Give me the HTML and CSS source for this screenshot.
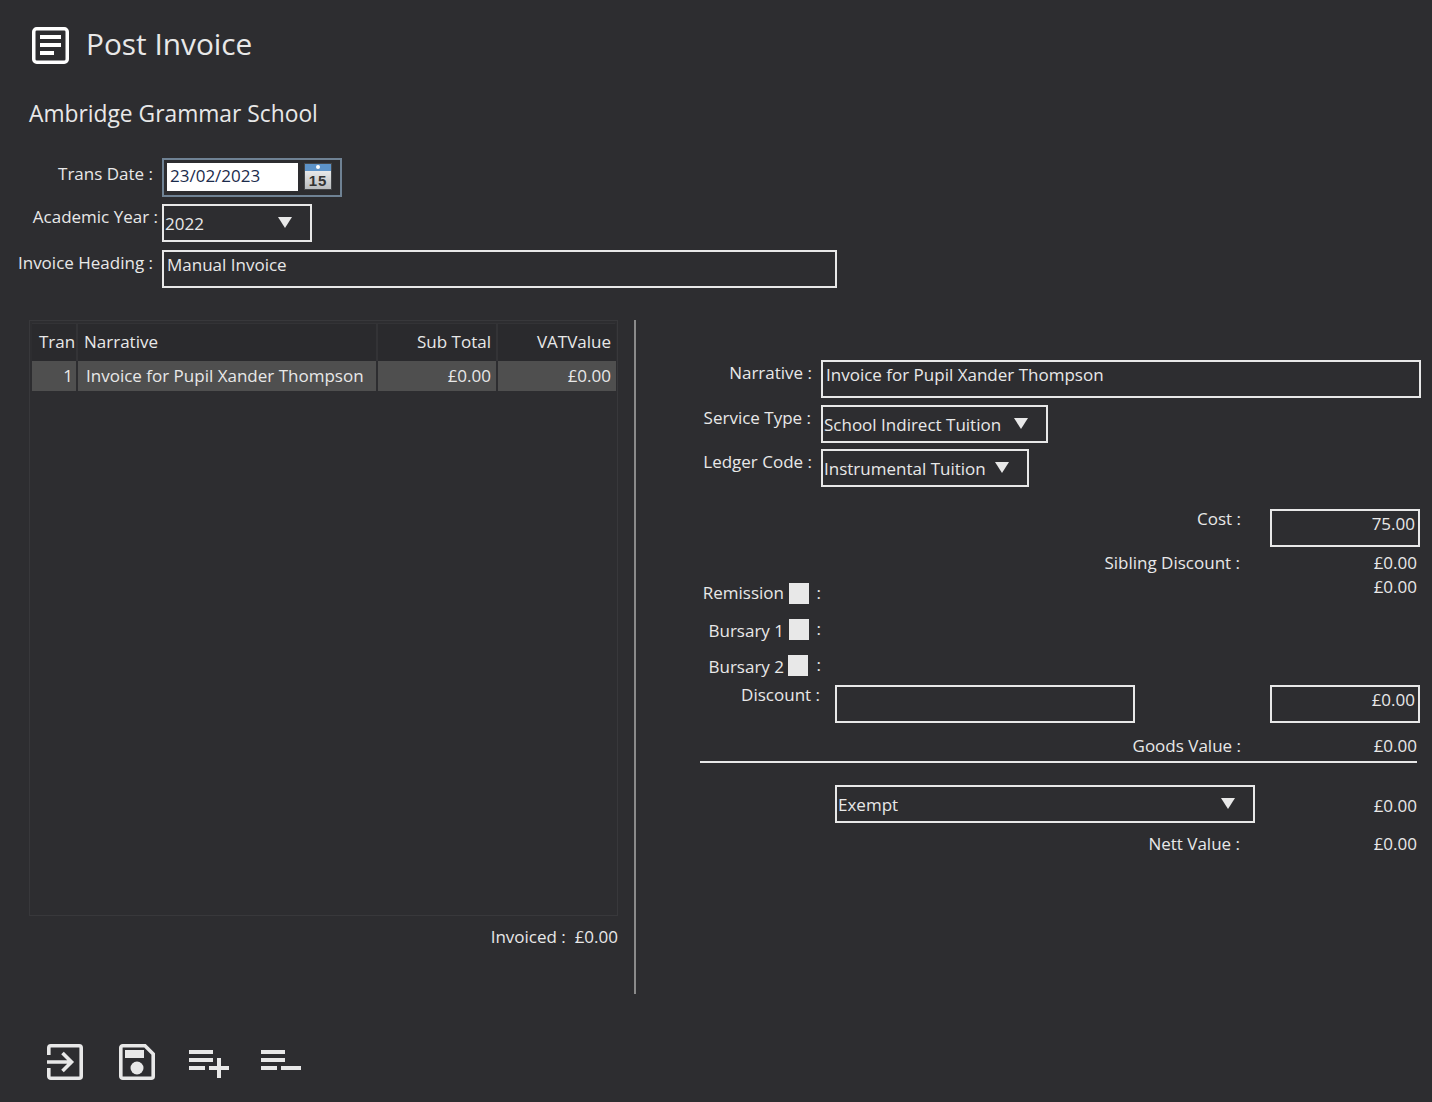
FILE: index.html
```html
<!DOCTYPE html>
<html lang="en">

<head>
  <meta charset="UTF-8">
  <meta name="viewport" content="width=device-width, initial-scale=1.0">
  <title>Post Invoice</title>
  <link rel="stylesheet" href="styles.css">
</head>

<body>
  <div class="header">
    <svg class="header-icon" width="37" height="37" viewBox="0 0 37 37">
      <rect x="1.750" y="1.750" width="33.500" height="33.500" rx="3" fill="none" stroke="#fff" stroke-width="3.500" />
      <path d="M8 8h21v4H8zM8 16h21v4H8zM8 24h14v4H8z" fill="#fff" />
    </svg>
    <h1 class="title">Post Invoice</h1>
  </div>
  <h2 class="school">Ambridge Grammar School</h2>

  <div class="top-form">
    <div class="top-row date-row">
      <label class="top-label">Trans Date :</label>
      <div class="date-box">
        <span class="date-input">23/02/2023</span>
        <span class="calendar"><span class="calendar-head"></span><span class="calendar-day">15</span></span>
      </div>
    </div>
    <div class="top-row year-row">
      <label class="top-label year-label">Academic Year :</label>
      <div class="field select w150"><span>2022</span><i class="arrow"></i></div>
    </div>
    <div class="top-row heading-row">
      <label class="top-label">Invoice Heading :</label>
      <div class="field text w675">Manual Invoice</div>
    </div>
  </div>

  <div class="main">
    <div class="left">
      <div class="grid-box">
        <div class="grid-row grid-head">
          <div class="cell c-tran">Tran</div>
          <div class="cell c-narr">Narrative</div>
          <div class="cell c-sub">Sub Total</div>
          <div class="cell c-vat">VATValue</div>
        </div>
        <div class="grid-row grid-sel">
          <div class="cell c-tran num">1</div>
          <div class="cell c-narr">Invoice for Pupil Xander Thompson</div>
          <div class="cell c-sub">£0.00</div>
          <div class="cell c-vat">£0.00</div>
        </div>
      </div>
      <div class="invoiced">Invoiced :&nbsp; £0.00</div>
    </div>

    <div class="right">
      <div class="row r-narr">
        <label class="lbl l-176">Narrative :</label>
        <div class="field text w600">Invoice for Pupil Xander Thompson</div>
      </div>
      <div class="row r-service">
        <label class="lbl l-175">Service Type :</label>
        <div class="field select w227 s-service"><span>School Indirect Tuition</span><i class="arrow"></i></div>
      </div>
      <div class="row r-ledger">
        <label class="lbl l-176">Ledger Code :</label>
        <div class="field select w208 s-ledger"><span>Instrumental Tuition</span><i class="arrow"></i></div>
      </div>

      <div class="row r-cost">
        <label class="lbl l-605">Cost :</label>
        <div class="field amount w150">75.00</div>
      </div>
      <div class="row r-sibling">
        <label class="lbl l-604">Sibling Discount :</label>
        <div class="value">£0.00</div>
      </div>
      <div class="row r-blank">
        <div class="value v-only">£0.00</div>
      </div>

      <div class="check-row r-rem">
        <span class="check-label">Remission</span><span class="check"></span><span class="colon">:</span>
      </div>
      <div class="check-row r-b1">
        <span class="check-label low">Bursary 1</span><span class="check"></span><span class="colon">:</span>
      </div>
      <div class="check-row r-b2">
        <span class="check-label low">Bursary 2</span><span class="check shift"></span><span class="colon">:</span>
      </div>

      <div class="row r-disc">
        <label class="lbl l-184">Discount :</label>
        <div class="field w300"></div>
        <div class="field amount w150 push135">£0.00</div>
      </div>
      <div class="row r-goods">
        <label class="lbl l-605">Goods Value :</label>
        <div class="value v-short">£0.00</div>
      </div>
      <div class="rule"></div>
      <div class="row r-vat">
        <div class="field select w420 s-vat"><span>Exempt</span><i class="arrow"></i></div>
        <div class="value v-vat">£0.00</div>
      </div>
      <div class="row r-nett">
        <label class="lbl l-604">Nett Value :</label>
        <div class="value">£0.00</div>
      </div>
    </div>
  </div>

  <div class="toolbar">
    <div class="tool">
      <svg width="38" height="38" viewBox="0 0 38 38">
        <path d="M2.800 12V4.800a2 2 0 0 1 2-2h28.400a2 2 0 0 1 2 2v28.400a2 2 0 0 1-2 2H4.800a2 2 0 0 1-2-2V25" fill="none" stroke="#e8e8e8" stroke-width="3.600" />
        <path d="M1 19h25M16.500 10l9 9-9 9" fill="none" stroke="#e8e8e8" stroke-width="3.600" />
      </svg>
    </div>
    <div class="tool">
      <svg width="38" height="38" viewBox="0 0 38 38">
        <path d="M4.800 2.800H27l8.200 8.200v22.200a2 2 0 0 1-2 2H4.800a2 2 0 0 1-2-2V4.800a2 2 0 0 1 2-2z" fill="none" stroke="#e8e8e8" stroke-width="3.600" />
        <path d="M7 7h19v8H7z" fill="#e8e8e8" />
        <circle cx="19" cy="25" r="6.500" fill="#e8e8e8" />
      </svg>
    </div>
    <div class="tool tool-list">
      <svg width="42" height="38" viewBox="0 0 42 38">
        <path d="M1 7h24v4H1zM1 15h24v4H1zM1 23h16v4H1zM21 23h20v4H21zM29 15h4v20h-4z" fill="#e8e8e8" />
      </svg>
    </div>
    <div class="tool tool-list">
      <svg width="42" height="38" viewBox="0 0 42 38">
        <path d="M1 7h24v4H1zM1 15h24v4H1zM1 23h16v4H1zM21 23h20v4H21z" fill="#e8e8e8" />
      </svg>
    </div>
  </div>
</body>

</html>
```

FILE: styles.css
```css
* {
  box-sizing: border-box;
}

html,
body {
  width: 100%;
  height: 100%;
  margin: 0;
}

body {
  height: 1102px;
  overflow: hidden;
  background-color: #2d2d30;
  color: #e8e8e8;
  font-family: "Open Sans", "Noto Sans", Arial, sans-serif;
  font-size: 17px;
  line-height: 24px;
}

.header {
  display: flex;
  align-items: center;
  height: 38px;
  margin: 26px 0 0 32px;
}

.title {
  margin: 0 0 2px 17px;
  font-size: 29.800px;
  font-weight: 400;
  line-height: 38px;
}

.school {
  margin: 34px 0 0 29px;
  font-size: 22.800px;
  font-weight: 400;
  line-height: 32px;
}

.top-form {
  margin-top: 28px;
}

.top-row {
  display: flex;
}

.top-label {
  width: 153px;
  margin-right: 9px;
  text-align: right;
  white-space: nowrap;
}

.date-row {
  height: 39px;
}

.year-row {
  height: 38px;
  margin-top: 7px;
}

.heading-row {
  height: 38px;
  margin-top: 8px;
}

.year-label {
  width: 158px;
  margin-right: 4px;
  padding-top: 1px;
}

.date-row .top-label {
  padding-top: 4px;
}

.heading-row .top-label {
  padding-top: 1px;
}

.date-box {
  display: flex;
  width: 180px;
  height: 39px;
  padding: 3px;
  border: 2px solid #6f8294;
}

.date-input {
  width: 131px;
  height: 28px;
  padding-left: 3px;
  background-color: #fff;
  color: #1b2b4b;
  line-height: 26px;
}

.calendar {
  position: relative;
  display: block;
  width: 28px;
  height: 27px;
  margin-left: 6px;
  border: 1px solid #45474a;
  background: linear-gradient(#fafafa, #b9bcbf);
}

.calendar-head {
  display: block;
  position: relative;
  height: 7px;
  background-color: #5d93c9;
}

.calendar-head::after {
  content: "";
  position: absolute;
  top: 1px;
  left: 11px;
  width: 4px;
  height: 4px;
  border-radius: 50%;
  background-color: #fff;
}

.calendar-day {
  display: block;
  color: #333;
  font-family: "Liberation Sans", Arial, sans-serif;
  font-size: 15px;
  font-weight: bold;
  line-height: 19px;
  letter-spacing: 1px;
  text-align: center;
}

.field {
  height: 38px;
  border: 2px solid #e8e8e8;
  white-space: nowrap;
}

.text {
  padding: 0 0 0 3px;
  line-height: 26px;
}

.select {
  display: flex;
  padding: 5px 0 0 1px;
  line-height: 25px;
}

.amount {
  padding-right: 3px;
  line-height: 26px;
  text-align: right;
}

.arrow {
  width: 0;
  height: 0;
  margin: 6px 0 0 74px;
  border-top: 11px solid #e8e8e8;
  border-left: 7.500px solid transparent;
  border-right: 7.500px solid transparent;
}

.w150 {
  width: 150px;
}

.w208 {
  width: 208px;
}

.w227 {
  width: 227px;
}

.w300 {
  width: 300px;
}

.w420 {
  width: 420px;
}

.w600 {
  width: 600px;
}

.w675 {
  width: 675px;
}

.s-service,
.s-ledger,
.s-vat {
  justify-content: space-between;
  padding-right: 18px;
}

.s-service .arrow,
.s-ledger .arrow,
.s-vat .arrow {
  margin-left: 0;
}

.main {
  display: flex;
  height: 674px;
  margin-top: 32px;
}

.left {
  width: 634px;
  padding-left: 29px;
}

.grid-box {
  width: 589px;
  height: 596px;
  padding: 2px;
  border: 1px solid #38383b;
}

.grid-row {
  display: flex;
  gap: 2px;
}

.grid-head {
  height: 38px;
  padding-top: 1px;
  background-color: #333336;
  line-height: 36px;
}

.grid-head .cell {
  background-color: #2a2a2d;
}

.grid-sel {
  height: 30px;
  line-height: 30px;
}

.grid-sel .cell {
  background-color: #4f4f4f;
}

.cell {
  height: 100%;
  padding: 0 5px;
  white-space: nowrap;
}

.c-tran {
  width: 44px;
  flex: none;
  padding-left: 7px;
  padding-right: 0;
}

.c-tran.num {
  text-align: right;
  padding-right: 3px;
}

.c-narr {
  width: 298px;
  flex: none;
  padding-left: 8px;
}

.grid-head .c-narr {
  padding-left: 6px;
}

.c-sub {
  width: 118px;
  flex: none;
  text-align: right;
}

.c-vat {
  width: 118px;
  flex: none;
  text-align: right;
}

.invoiced {
  width: 589px;
  margin-top: 9px;
  text-align: right;
}

.right {
  width: 798px;
  height: 674px;
  border-left: 2px solid #8a8a8a;
}

.row {
  display: flex;
}

.lbl {
  flex: none;
  text-align: right;
  white-space: nowrap;
}

.l-176 {
  width: 176px;
  margin-right: 9px;
}

.l-175 {
  width: 175px;
  margin-right: 10px;
}

.l-184 {
  width: 184px;
  margin-right: 15px;
}

.l-605 {
  width: 605px;
  margin-right: 29px;
}

.l-604 {
  width: 604px;
}

.value {
  width: 177px;
  text-align: right;
}

.v-short {
  width: 147px;
}

.v-only {
  margin-left: 604px;
}

.v-vat {
  width: 162px;
  padding-top: 9px;
}

.push135 {
  margin-left: 135px;
}

.r-narr {
  margin-top: 40px;
}

.r-narr .lbl,
.r-service .lbl,
.r-ledger .lbl {
  padding-top: 1px;
}

.r-service,
.r-ledger {
  margin-top: 7px;
}

.r-ledger {
  margin-top: 6px;
}

.r-cost {
  margin-top: 22px;
}

.r-cost .lbl,
.r-disc .lbl {
  margin-top: -2px;
}

.r-sibling {
  margin-top: 4px;
}

.check-row {
  display: flex;
  align-items: center;
  width: 185px;
  height: 22px;
  justify-content: flex-end;
}

.low {
  padding-top: 4px;
}

.r-rem {
  margin-top: -17px;
}

.r-b1 {
  margin-top: 14px;
}

.r-b2 {
  margin-top: 14px;
}

.check {
  width: 20px;
  height: 21px;
  margin: 0 0 0 5px;
  background-color: #e8e8e8;
}

.check.shift {
  margin: 0 1px 0 4px;
}

.colon {
  width: 12px;
  text-align: right;
}

.r-disc {
  margin-top: 9px;
}

.r-goods {
  margin-top: 11px;
}

.rule {
  width: 717px;
  height: 2px;
  margin: 3px 0 0 64px;
  background-color: #e8e8e8;
}

.r-vat {
  margin: 22px 0 0 199px;
}

.r-nett {
  margin-top: 9px;
}

.toolbar {
  display: flex;
  margin: 49px 0 0 46px;
}

.tool {
  width: 72px;
}

.tool-list svg {
  margin-left: -2px;
}
```
